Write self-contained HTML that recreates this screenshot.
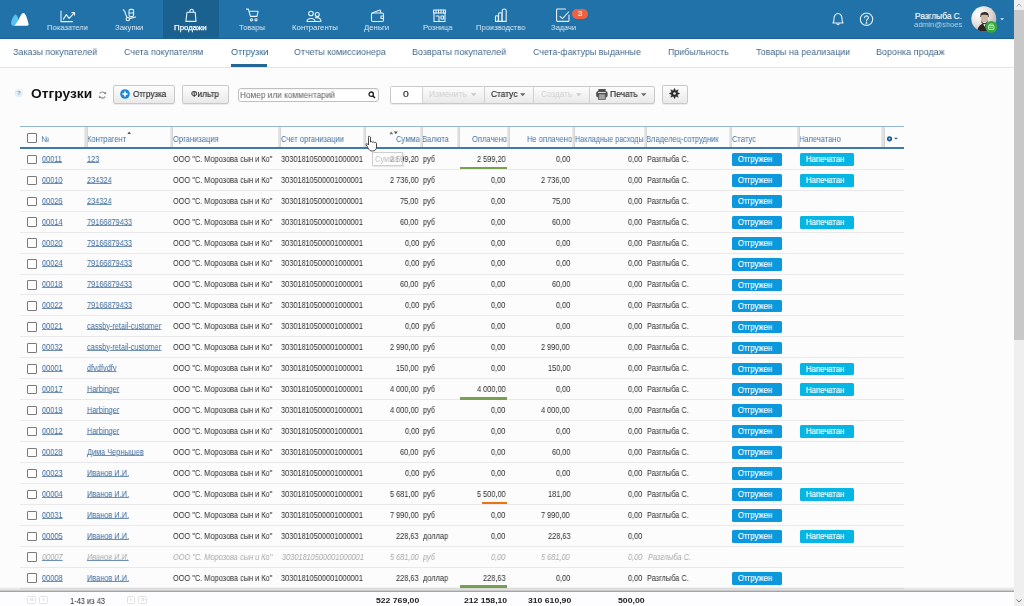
<!DOCTYPE html><html><head><meta charset="utf-8"><style>
*{margin:0;padding:0;box-sizing:border-box}
html,body{width:1024px;height:606px;overflow:hidden;background:#fdfcfd;font-family:"Liberation Sans",sans-serif}
.t{position:absolute;white-space:nowrap;line-height:1;transform-origin:0 0;will-change:transform}
.a{position:absolute}
</style></head><body>

<div class="a" style="left:0;top:0;width:1014px;height:38.6px;background:#2072a8"></div>
<div class="a" style="left:163px;top:0;width:56px;height:38px;background:#1b6190"></div>
<div class="a" style="left:0;top:37.6px;width:1014px;height:1px;background:#1a6196"></div>
<svg class="a" style="left:9px;top:11px" width="22" height="17" viewBox="0 0 22 17">
<path d="M6.1 3.5 C4.2 5.2 2.1 9 2.1 12.2 C2.1 13.8 3.2 14.8 5 14.8 L7.5 14.8 C8.8 12 9.6 9.5 9.1 7.2 C8.6 5.2 7.4 3.5 6.1 3.5Z" fill="#5cc0f0"/>
<path d="M14.5 1.9 C12.6 1.9 11 5.5 9.6 8.6 C8.4 11.2 7 12.8 5.6 14.8 L18.3 14.8 C19.4 14.8 19.8 13.9 19.5 12.6 C18.7 9.3 16.8 1.9 14.5 1.9Z" fill="#fff"/>
</svg>
<div class="t" style="left:47.29px;top:24.12px;font-size:7.8px;color:#dce9f3;transform:scaleX(0.9796);">Показатели</div>
<div class="t" style="left:115.33px;top:24.12px;font-size:7.8px;color:#dce9f3;transform:scaleX(0.9909);">Закупки</div>
<div class="t" style="left:174.17px;top:24.12px;font-size:7.8px;color:#ffffff;transform:scaleX(1.0053);-webkit-text-stroke:0.25px #fff;">Продажи</div>
<div class="t" style="left:239.45px;top:24.12px;font-size:7.8px;color:#dce9f3;transform:scaleX(0.9721);">Товары</div>
<div class="t" style="left:292.08px;top:24.12px;font-size:7.8px;color:#dce9f3;transform:scaleX(0.9895);">Контрагенты</div>
<div class="t" style="left:364.36px;top:24.12px;font-size:7.8px;color:#dce9f3;transform:scaleX(0.9915);">Деньги</div>
<div class="t" style="left:423.39px;top:24.12px;font-size:7.8px;color:#dce9f3;transform:scaleX(0.9789);">Розница</div>
<div class="t" style="left:476.39px;top:24.12px;font-size:7.8px;color:#dce9f3;transform:scaleX(0.9696);">Производство</div>
<div class="t" style="left:550.54px;top:24.12px;font-size:7.8px;color:#dce9f3;transform:scaleX(0.9610);">Задачи</div>
<svg class="a" style="left:60px;top:10px" width="17" height="13" viewBox="0 0 17 13"><path d="M1 1 V11.6 H12.5" fill="none" stroke="#e6f0f7" stroke-width="1.1" stroke-linecap="round" stroke-linejoin="round"/><path d="M3.4 9.1 L6.3 4.6 L9.1 8.3 L14.3 2.8" fill="none" stroke="#e6f0f7" stroke-width="1.1" stroke-linecap="round" stroke-linejoin="round"/><path d="M11.9 2.6 H14.5 V5.1" fill="none" stroke="#e6f0f7" stroke-width="1.1" stroke-linecap="round" stroke-linejoin="round"/></svg>
<svg class="a" style="left:121px;top:8px" width="16" height="15" viewBox="0 0 16 15"><path d="M2.3 1.7 C3.5 2.5 4.3 4.5 4.8 6.5 L5.8 9.4" fill="none" stroke="#e6f0f7" stroke-width="1.1" stroke-linecap="round" stroke-linejoin="round"/><circle cx="6.8" cy="11.1" r="1.7" fill="none" stroke="#e6f0f7" stroke-width="1.1" stroke-linecap="round" stroke-linejoin="round"/><path d="M8.5 10.6 L14.6 9" fill="none" stroke="#e6f0f7" stroke-width="1.1" stroke-linecap="round" stroke-linejoin="round"/><rect x="8" y="1.4" width="4.6" height="7.2" rx="1.6" fill="none" stroke="#e6f0f7" stroke-width="1.1" stroke-linecap="round" stroke-linejoin="round"/><path d="M8.3 5 H12.3" fill="none" stroke="#e6f0f7" stroke-width="1.1" stroke-linecap="round" stroke-linejoin="round"/></svg>
<svg class="a" style="left:184px;top:8px" width="14" height="15" viewBox="0 0 14 15"><path d="M3 4.2 H11.2 L12 13.4 H1.9 Z" fill="none" stroke="#e6f0f7" stroke-width="1.1" stroke-linecap="round" stroke-linejoin="round"/><path d="M5.9 4.2 V2.9 C5.9 0.6 9.4 0.6 9.4 2.9 V4.2" fill="none" stroke="#e6f0f7" stroke-width="1.1" stroke-linecap="round" stroke-linejoin="round"/></svg>
<svg class="a" style="left:245px;top:8px" width="15" height="15" viewBox="0 0 15 15"><path d="M1.4 1.1 H3.4 L5.4 8.4 H12 L13 3.3 H3.9" fill="none" stroke="#e6f0f7" stroke-width="1.1" stroke-linecap="round" stroke-linejoin="round"/><circle cx="6.5" cy="11.8" r="1.1" fill="none" stroke="#e6f0f7" stroke-width="1.1" stroke-linecap="round" stroke-linejoin="round"/><circle cx="11" cy="11.8" r="1.1" fill="none" stroke="#e6f0f7" stroke-width="1.1" stroke-linecap="round" stroke-linejoin="round"/></svg>
<svg class="a" style="left:306px;top:10px" width="16" height="13" viewBox="0 0 16 13"><circle cx="5" cy="3.5" r="2.3" fill="none" stroke="#e6f0f7" stroke-width="1.1" stroke-linecap="round" stroke-linejoin="round"/><path d="M1 11.5 C1 7.5 9 7.5 9 11.5 Z" fill="none" stroke="#e6f0f7" stroke-width="1.1" stroke-linecap="round" stroke-linejoin="round"/><circle cx="11.3" cy="4.5" r="2" fill="none" stroke="#e6f0f7" stroke-width="1.1" stroke-linecap="round" stroke-linejoin="round"/><path d="M9.5 7.8 C12.5 7.2 15 8.5 15 11.5 H9" fill="none" stroke="#e6f0f7" stroke-width="1.1" stroke-linecap="round" stroke-linejoin="round"/></svg>
<svg class="a" style="left:370px;top:8px" width="15" height="15" viewBox="0 0 15 15"><path d="M2 5 L10 2 L11 5" fill="none" stroke="#e6f0f7" stroke-width="1.1" stroke-linecap="round" stroke-linejoin="round"/><rect x="1.5" y="5" width="12" height="8.5" rx="1.5" fill="none" stroke="#e6f0f7" stroke-width="1.1" stroke-linecap="round" stroke-linejoin="round"/><path d="M13.5 8 H11 V10.5 H13.5" fill="none" stroke="#e6f0f7" stroke-width="1.1" stroke-linecap="round" stroke-linejoin="round"/></svg>
<svg class="a" style="left:432px;top:8px" width="15" height="15" viewBox="0 0 15 15"><path d="M1.5 2 H13.5 V5 H1.5 Z" fill="none" stroke="#e6f0f7" stroke-width="1.1" stroke-linecap="round" stroke-linejoin="round"/><path d="M4 2 V5 M6.5 2 V5 M9 2 V5 M11.5 2 V5" fill="none" stroke="#e6f0f7" stroke-width="1.1" stroke-linecap="round" stroke-linejoin="round"/><path d="M2 5 V13.5 H13 V5" fill="none" stroke="#e6f0f7" stroke-width="1.1" stroke-linecap="round" stroke-linejoin="round"/><path d="M4 8 H7 V13.5 M9 8 H11.5 V11 H9 Z" fill="none" stroke="#e6f0f7" stroke-width="1.1" stroke-linecap="round" stroke-linejoin="round"/></svg>
<svg class="a" style="left:494px;top:8px" width="15" height="15" viewBox="0 0 15 15"><path d="M1.5 13.4 V8.6 C1.5 7.4 4.3 7.4 4.3 8.6 V13.4 M4.6 13.4 V5.6 C4.6 4.4 7.8 4.4 7.8 5.6 V13.4 M8.2 13.4 V2.4 C8.2 0.6 12.2 0.6 12.2 2.4 V13.4 Z M1.5 13.4 H12.2" fill="none" stroke="#e6f0f7" stroke-width="1.1" stroke-linecap="round" stroke-linejoin="round"/></svg>
<svg class="a" style="left:555px;top:8px" width="16" height="15" viewBox="0 0 16 15"><path d="M10.5 1 H2.4 C1.9 1 1.6 1.3 1.6 1.8 V12.6 C1.6 13.1 1.9 13.4 2.4 13.4 H13.2 C13.7 13.4 14 13.1 14 12.6 V7" fill="none" stroke="#e6f0f7" stroke-width="1.1" stroke-linecap="round" stroke-linejoin="round"/><path d="M5 8.4 L7.5 10.6 L13.6 4" fill="none" stroke="#e6f0f7" stroke-width="1.1" stroke-linecap="round" stroke-linejoin="round"/></svg>
<div class="a" style="left:572px;top:9px;width:16px;height:9.5px;border-radius:5px;background:#ec6242"></div>
<div class="t" style="left:577.90px;top:10.29px;font-size:7.6px;color:#fff;-webkit-text-stroke:0.15px #fff;">3</div>
<svg class="a" style="left:831px;top:12px" width="14" height="14" viewBox="0 0 14 14"><path d="M2 11 C3 10 3 9 3 6.5 C3 3.5 5 1.5 7 1.5 C9 1.5 11 3.5 11 6.5 C11 9 11 10 12 11 Z" fill="none" stroke="#e6f0f7" stroke-width="1.1" stroke-linecap="round" stroke-linejoin="round"/><path d="M5.8 11.5 C6 13 8 13 8.2 11.5" fill="none" stroke="#e6f0f7" stroke-width="1.1" stroke-linecap="round" stroke-linejoin="round"/></svg>
<svg class="a" style="left:859px;top:12px" width="15" height="15" viewBox="0 0 15 15"><circle cx="7.5" cy="7.2" r="6.2" fill="none" stroke="#e6f0f7" stroke-width="1.1" stroke-linecap="round" stroke-linejoin="round"/><path d="M5.6 5.8 C5.6 3.2 9.4 3.2 9.4 5.7 C9.4 7.1 7.5 7.2 7.5 8.9" fill="none" stroke="#e6f0f7" stroke-width="1.1" stroke-linecap="round" stroke-linejoin="round" stroke-width="1.8" stroke-linecap="butt"/><circle cx="7.5" cy="10.9" r="0.95" fill="#e6f0f7"/></svg>
<div class="t" style="left:914.63px;top:11.66px;font-size:8.6px;color:#f6f9fc;transform:scaleX(0.9671);-webkit-text-stroke:0.2px #f6f9fc;">Разглыба С.</div>
<div class="t" style="left:913.50px;top:21.04px;font-size:7.9px;color:#b9d3e8;transform:scaleX(0.9559);">admin@shoes</div>
<svg class="a" style="left:971px;top:6px" width="28" height="28" viewBox="0 0 28 28">
<defs><radialGradient id="av" cx="0.3" cy="0.3" r="0.8"><stop offset="0" stop-color="#ffffff"/><stop offset="0.55" stop-color="#e4dfdc"/><stop offset="1" stop-color="#b9b0ab"/></radialGradient>
<clipPath id="avc"><circle cx="12.8" cy="12.8" r="12.5"/></clipPath></defs>
<circle cx="12.8" cy="12.8" r="12.5" fill="url(#av)"/>
<g clip-path="url(#avc)">
<path d="M9.5 8.5 C9.5 5.5 16.5 5 17.5 8 L17.8 11 L9.2 11 Z" fill="#3a302b"/>
<path d="M10 9.5 C11 8.5 16 8.5 17 9.5 L16.8 14 C16 17 11 17 10.2 14 Z" fill="#cdb9a8"/>
<path d="M10.3 13.5 C11 18.5 16 18.5 16.8 13.5 L16.6 16.5 C15.5 19 11.5 19 10.4 16.5 Z" fill="#4a3c34"/>
<path d="M6 26 C7 19 11 17.5 13.5 17.5 C16 17.5 20 19 21.5 26 Z" fill="#2e2622"/>
<path d="M12.3 18 L13.5 21 L14.7 18 Z" fill="#e8e0da"/>
</g>
<circle cx="20.3" cy="21" r="6" fill="#34a83a"/>
<path d="M17.6 19.6 H23 V23.4 H17.6 Z" fill="none" stroke="#cfeecf" stroke-width="0.9"/>
<path d="M18.2 19.6 L19 18 H21.6 L22.4 19.6 M18.2 21.4 H22.4" fill="none" stroke="#cfeecf" stroke-width="0.8"/>
</svg>
<svg class="a" style="left:999.5px;top:17.8px" width="5" height="3" viewBox="0 0 5 3"><path d="M0.2 0.2 H4.0 L2.1 2.3Z" fill="#e6f0f7"/></svg>
<div class="a" style="left:0;top:38.6px;width:1014px;height:28.4px;background:#fff"></div>
<div class="a" style="left:0;top:67px;width:1014px;height:1px;background:#e4e4e6"></div>
<div class="t" style="left:13.19px;top:47.28px;font-size:9.9px;color:#43688a;transform:scaleX(0.9064);">Заказы покупателей</div>
<div class="t" style="left:124.16px;top:47.28px;font-size:9.9px;color:#43688a;transform:scaleX(0.8974);">Счета покупателям</div>
<div class="t" style="left:230.59px;top:47.28px;font-size:9.9px;color:#2b6390;transform:scaleX(0.9227);">Отгрузки</div>
<div class="t" style="left:293.60px;top:47.28px;font-size:9.9px;color:#43688a;transform:scaleX(0.8995);">Отчеты комиссионера</div>
<div class="t" style="left:412.08px;top:47.28px;font-size:9.9px;color:#43688a;transform:scaleX(0.9061);">Возвраты покупателей</div>
<div class="t" style="left:533.26px;top:47.28px;font-size:9.9px;color:#43688a;transform:scaleX(0.8957);">Счета-фактуры выданные</div>
<div class="t" style="left:668.29px;top:47.28px;font-size:9.9px;color:#43688a;transform:scaleX(0.9007);">Прибыльность</div>
<div class="t" style="left:755.82px;top:47.28px;font-size:9.9px;color:#43688a;transform:scaleX(0.8979);">Товары на реализации</div>
<div class="t" style="left:876.28px;top:47.28px;font-size:9.9px;color:#43688a;transform:scaleX(0.9110);">Воронка продаж</div>
<div class="a" style="left:230.5px;top:64px;width:36.5px;height:2.6px;background:#236796"></div>
<svg class="a" style="left:14px;top:89px" width="10" height="9" viewBox="0 0 10 9"><circle cx="4.6" cy="4.2" r="4" fill="#e3eef7"/><text x="4.8" y="6.4" font-size="6" text-anchor="middle" fill="#7b9fbe" font-family="Liberation Sans" font-weight="700">?</text></svg>
<div class="t" style="left:30.95px;top:87.22px;font-size:13.7px;color:#151515;font-weight:700;transform:scaleX(1.0059);">Отгрузки</div>
<svg class="a" style="left:98px;top:91px" width="9" height="8" viewBox="0 0 9 8"><path d="M7.2 3 A3.1 3.1 0 0 0 1.6 2.6" fill="none" stroke="#8a8a8a" stroke-width="1.1"/><path d="M1.5 5 A3.1 3.1 0 0 0 7.2 5.4" fill="none" stroke="#8a8a8a" stroke-width="1.1"/><path d="M6 1 L7.6 3.4 L8.5 1.2Z" fill="#8a8a8a"/><path d="M3 7 L1.4 4.6 L0.5 6.8Z" fill="#8a8a8a"/></svg>
<div class="a" style="left:113px;top:85px;width:62px;height:18.5px;background:linear-gradient(#fdfdfd,#e9e9ea);border:1px solid #c9c9cb;border-radius:2px;box-shadow:0 1px 0 rgba(0,0,0,0.06)"></div>
<svg class="a" style="left:119.6px;top:89px" width="10" height="10" viewBox="0 0 10 10"><circle cx="5" cy="5" r="4.8" fill="#1d88cf"/><path d="M5 2.4 V7.6 M2.4 5 H7.6" stroke="#fff" stroke-width="1.6"/></svg>
<div class="t" style="left:132.64px;top:90.16px;font-size:8.6px;color:#2a2a2a;transform:scaleX(0.9416);-webkit-text-stroke:0.15px #2a2a2a;">Отгрузка</div>
<div class="a" style="left:181.5px;top:85px;width:47px;height:18.5px;background:linear-gradient(#fdfdfd,#e9e9ea);border:1px solid #c9c9cb;border-radius:2px;box-shadow:0 1px 0 rgba(0,0,0,0.06)"></div>
<div class="t" style="left:190.54px;top:90.24px;font-size:8.5px;color:#2a2a2a;transform:scaleX(0.9801);-webkit-text-stroke:0.15px #2a2a2a;">Фильтр</div>
<div class="a" style="left:238px;top:87.5px;width:141px;height:14px;background:#fff;border:1px solid #c0c0c3;border-radius:3px;box-shadow:inset 0 1px 1px rgba(0,0,0,0.05)"></div>
<div class="t" style="left:239.94px;top:90.61px;font-size:8.3px;color:#626262;transform:scaleX(0.9946);">Номер или комментарий</div>
<svg class="a" style="left:367.5px;top:91px" width="8" height="8" viewBox="0 0 8 8"><circle cx="3.2" cy="3.2" r="2.2" fill="none" stroke="#222" stroke-width="1.3"/><path d="M4.8 4.8 L7 7" stroke="#222" stroke-width="1.6"/></svg>
<div class="a" style="left:390px;top:85.5px;width:264.5px;height:18px;background:linear-gradient(#fdfdfd,#e9e9ea);border:1px solid #c9c9cb;border-radius:2px;box-shadow:0 1px 0 rgba(0,0,0,0.06)"></div>
<div class="a" style="left:391px;top:86.5px;width:31.5px;height:16px;background:#fff"></div>
<div class="a" style="left:422.3px;top:86px;width:1px;height:17px;background:#d2d2d4"></div>
<div class="a" style="left:483.5px;top:86px;width:1px;height:17px;background:#d2d2d4"></div>
<div class="a" style="left:533.2px;top:86px;width:1px;height:17px;background:#d2d2d4"></div>
<div class="a" style="left:588.6px;top:86px;width:1px;height:17px;background:#d2d2d4"></div>
<div class="t" style="left:403.38px;top:90.03px;font-size:9.0px;color:#2a2a2a;transform:scaleX(1.1574);-webkit-text-stroke:0.15px #2a2a2a;">0</div>
<div class="t" style="left:428.63px;top:90.27px;font-size:8.7px;color:#cfcfd1;transform:scaleX(0.9609);">Изменить</div>
<div class="t" style="left:490.58px;top:90.19px;font-size:8.8px;color:#2a2a2a;transform:scaleX(0.9503);-webkit-text-stroke:0.15px #2a2a2a;">Статус</div>
<div class="t" style="left:540.89px;top:90.27px;font-size:8.7px;color:#cfcfd1;transform:scaleX(0.9434);">Создать</div>
<div class="t" style="left:610.13px;top:90.16px;font-size:8.6px;color:#2a2a2a;transform:scaleX(0.9804);-webkit-text-stroke:0.15px #2a2a2a;">Печать</div>
<svg class="a" style="left:470.7px;top:92.5px" width="6" height="4" viewBox="0 0 6 4"><path d="M0 0.3 H5.4 L2.7 3.2Z" fill="#c9c9cb"/></svg>
<svg class="a" style="left:520.2px;top:92.5px" width="6" height="4" viewBox="0 0 6 4"><path d="M0 0.3 H5.4 L2.7 3.2Z" fill="#666"/></svg>
<svg class="a" style="left:575.7px;top:92.5px" width="6" height="4" viewBox="0 0 6 4"><path d="M0 0.3 H5.4 L2.7 3.2Z" fill="#c9c9cb"/></svg>
<svg class="a" style="left:641px;top:92.5px" width="6" height="4" viewBox="0 0 6 4"><path d="M0 0.3 H5.4 L2.7 3.2Z" fill="#666"/></svg>
<svg class="a" style="left:596px;top:88.7px" width="12" height="11" viewBox="0 0 12 11"><rect x="2.3" y="0" width="7.4" height="3" rx="0.6" fill="#505050"/><rect x="0.2" y="2" width="11.4" height="6.4" rx="2.2" fill="#505050"/><rect x="2" y="3.1" width="7.8" height="0.9" fill="#eeeeee"/><rect x="2.5" y="5" width="6.8" height="5.6" fill="#9a9a9a" stroke="#505050" stroke-width="0.7"/><path d="M4.3 5.5 V10.3 M5.9 5.5 V10.3 M7.5 5.5 V10.3" stroke="#b8b8b8" stroke-width="0.5"/></svg>
<div class="a" style="left:662px;top:85px;width:25.8px;height:18.6px;background:linear-gradient(#fdfdfd,#e9e9ea);border:1px solid #c9c9cb;border-radius:2px;box-shadow:0 1px 0 rgba(0,0,0,0.06)"></div>
<svg class="a" style="left:668.9px;top:88.4px" width="11" height="11" viewBox="0 0 11 11"><polygon points="5.50,0.20 6.69,2.64 9.25,1.75 8.36,4.31 10.80,5.50 8.36,6.69 9.25,9.25 6.69,8.36 5.50,10.80 4.31,8.36 1.75,9.25 2.64,6.69 0.20,5.50 2.64,4.31 1.75,1.75 4.31,2.64" fill="#2b2b2b" stroke="#2b2b2b" stroke-width="0.4" stroke-linejoin="round"/><circle cx="5.5" cy="5.5" r="1.3" fill="#f2f2f2"/></svg>
<div class="a" style="left:1014px;top:0;width:10px;height:606px;background:#efefef"></div>
<div class="a" style="left:1014px;top:10px;width:10px;height:330px;background:#c8c8c8"></div>
<svg class="a" style="left:1016px;top:3px" width="6" height="4" viewBox="0 0 6 4"><path d="M0.5 3.5 L3 1 L5.5 3.5" fill="none" stroke="#a0a0a0" stroke-width="0.9"/></svg>
<svg class="a" style="left:1016px;top:599px" width="6" height="4" viewBox="0 0 6 4"><path d="M0.5 0.5 L3 3 L5.5 0.5" fill="none" stroke="#666" stroke-width="0.9"/></svg>
<div class="a" style="left:20px;top:126px;width:884px;height:1px;background:#93b6d4"></div>
<div class="a" style="left:20px;top:127px;width:884px;height:20px;background:#fdfcfd"></div>
<div class="a" style="left:20px;top:147px;width:884px;height:2px;background:#3b7aab"></div>
<div class="t" style="left:41.32px;top:134.82px;font-size:8.4px;color:#4373a2;transform:scaleX(0.9036);">№</div>
<div class="t" style="left:86.89px;top:134.82px;font-size:8.4px;color:#4373a2;transform:scaleX(0.9036);">Контрагент</div>
<div class="t" style="left:172.66px;top:134.82px;font-size:8.4px;color:#4373a2;transform:scaleX(0.9036);">Организация</div>
<div class="t" style="left:281.02px;top:134.82px;font-size:8.4px;color:#4373a2;transform:scaleX(0.9036);">Счет организации</div>
<div class="t" style="left:395.77px;top:134.82px;font-size:8.4px;color:#4373a2;transform:scaleX(0.9036);">Сумма</div>
<div class="t" style="left:422.39px;top:134.82px;font-size:8.4px;color:#4373a2;transform:scaleX(0.9036);">Валюта</div>
<div class="t" style="left:472.24px;top:134.82px;font-size:8.4px;color:#4373a2;transform:scaleX(0.9036);">Оплачено</div>
<div class="t" style="left:527.00px;top:134.82px;font-size:8.4px;color:#4373a2;transform:scaleX(0.9036);">Не оплачено</div>
<div class="t" style="left:574.92px;top:134.82px;font-size:8.4px;color:#4373a2;transform:scaleX(0.8637);">Накладные расходы</div>
<div class="t" style="left:646.39px;top:134.82px;font-size:8.4px;color:#4373a2;transform:scaleX(0.9036);">Владелец-сотрудник</div>
<div class="t" style="left:731.62px;top:134.82px;font-size:8.4px;color:#4373a2;transform:scaleX(0.9036);">Статус</div>
<div class="t" style="left:799.39px;top:134.82px;font-size:8.4px;color:#4373a2;transform:scaleX(0.9036);">Напечатано</div>
<div class="a" style="left:27px;top:133px;width:9.5px;height:9.5px;border:1px solid #7a7a7a;border-radius:1px;background:#fff"></div>
<svg class="a" style="left:127px;top:131px" width="5" height="4" viewBox="0 0 5 4"><path d="M0.4 3 L2.2 0.6 L4 3Z" fill="#555"/></svg>
<svg class="a" style="left:388.5px;top:130.5px" width="9" height="4" viewBox="0 0 9 4"><path d="M0.3 3.3 L2.3 0.6 L4.3 3.3Z" fill="#777"/><path d="M4.8 0.6 L8.8 0.6 L6.8 3.3Z" fill="#555"/></svg>
<svg class="a" style="left:886px;top:134.5px" width="13" height="7" viewBox="0 0 13 7"><circle cx="3.5" cy="3.8" r="2.6" fill="#1f5a8a"/><circle cx="3.5" cy="3.8" r="0.9" fill="#bfe6ff"/><path d="M8 2.8 H12 L10 4.6Z" fill="#1f5a8a"/></svg>
<div class="a" style="left:84px;top:127px;width:4px;height:20px;background:#e0e0e0;border-left:1px solid #e8e8e8;border-right:1px solid #d6d6d6"></div>
<div class="a" style="left:170px;top:127px;width:3px;height:20px;background:#e0e0e0;border-left:1px solid #e8e8e8;border-right:1px solid #d6d6d6"></div>
<div class="a" style="left:278px;top:127px;width:3px;height:20px;background:#e0e0e0;border-left:1px solid #e8e8e8;border-right:1px solid #d6d6d6"></div>
<div class="a" style="left:363px;top:127px;width:3px;height:20px;background:#e0e0e0;border-left:1px solid #e8e8e8;border-right:1px solid #d6d6d6"></div>
<div class="a" style="left:420px;top:127px;width:3px;height:20px;background:#e0e0e0;border-left:1px solid #e8e8e8;border-right:1px solid #d6d6d6"></div>
<div class="a" style="left:457px;top:127px;width:3px;height:20px;background:#e0e0e0;border-left:1px solid #e8e8e8;border-right:1px solid #d6d6d6"></div>
<div class="a" style="left:507px;top:127px;width:3px;height:20px;background:#e0e0e0;border-left:1px solid #e8e8e8;border-right:1px solid #d6d6d6"></div>
<div class="a" style="left:572px;top:127px;width:3px;height:20px;background:#e0e0e0;border-left:1px solid #e8e8e8;border-right:1px solid #d6d6d6"></div>
<div class="a" style="left:644px;top:127px;width:3px;height:20px;background:#e0e0e0;border-left:1px solid #e8e8e8;border-right:1px solid #d6d6d6"></div>
<div class="a" style="left:729px;top:127px;width:3px;height:20px;background:#e0e0e0;border-left:1px solid #e8e8e8;border-right:1px solid #d6d6d6"></div>
<div class="a" style="left:797px;top:127px;width:3px;height:20px;background:#e0e0e0;border-left:1px solid #e8e8e8;border-right:1px solid #d6d6d6"></div>
<div class="a" style="left:881px;top:127px;width:4px;height:20px;background:#e0e0e0;border-left:1px solid #e8e8e8;border-right:1px solid #d6d6d6"></div>
<div class="a" style="left:20px;top:168.85px;width:884px;height:1px;background:#e9e9eb"></div>
<div class="a" style="left:27px;top:154.65px;width:9.5px;height:9.5px;border:1px solid #7a7a7a;border-radius:1px;background:#fff"></div>
<div class="t" style="left:42.01px;top:154.79px;font-size:8.5px;color:#3e6c9c;text-decoration:underline;text-decoration-thickness:0.8px;text-underline-offset:0.2px;text-decoration-color:rgba(62,108,156,0.75);transform:scaleX(0.8668);">00011</div>
<div class="t" style="left:86.95px;top:154.79px;font-size:8.5px;color:#3e6c9c;text-decoration:underline;text-decoration-thickness:0.8px;text-underline-offset:0.2px;text-decoration-color:rgba(62,108,156,0.75);transform:scaleX(0.8668);">123</div>
<div class="t" style="left:172.87px;top:154.79px;font-size:8.5px;color:#2c2c2c;transform:scaleX(0.8668);">ООО &quot;С. Морозова сын и Ко&quot;</div>
<div class="t" style="left:281.41px;top:154.79px;font-size:8.5px;color:#2c2c2c;transform:scaleX(0.8668);">30301810500001000001</div>
<div class="t" style="left:390.20px;top:154.79px;font-size:8.5px;color:#2c2c2c;transform:scaleX(0.8668);">2 599,20</div>
<div class="t" style="left:422.52px;top:154.79px;font-size:8.5px;color:#2c2c2c;transform:scaleX(0.8668);">руб</div>
<div class="t" style="left:477.00px;top:154.79px;font-size:8.5px;color:#2c2c2c;transform:scaleX(0.8668);">2 599,20</div>
<div class="t" style="left:555.73px;top:154.79px;font-size:8.5px;color:#2c2c2c;transform:scaleX(0.8668);">0,00</div>
<div class="t" style="left:628.43px;top:154.79px;font-size:8.5px;color:#2c2c2c;transform:scaleX(0.8668);">0,00</div>
<div class="t" style="left:647.31px;top:154.79px;font-size:8.5px;color:#2c2c2c;transform:scaleX(0.8668);">Разглыба С.</div>
<div class="a" style="left:732.2px;top:153.15px;width:50.3px;height:12.7px;background:#0c98dd;border-radius:1.5px"></div>
<div class="t" style="left:738.45px;top:155.21px;font-size:8.6px;color:#fff;transform:scaleX(0.9017);-webkit-text-stroke:0.15px #fff;">Отгружен</div>
<div class="a" style="left:800px;top:153.15px;width:54px;height:12.7px;background:#05b5e3;border-radius:1.5px"></div>
<div class="t" style="left:806.08px;top:155.21px;font-size:8.6px;color:#fff;transform:scaleX(0.9075);-webkit-text-stroke:0.15px #fff;">Напечатан</div>
<div class="a" style="left:460.2px;top:166.55px;width:46.8px;height:2.7px;background:#78a04e"></div>
<div class="a" style="left:20px;top:189.79px;width:884px;height:1px;background:#e9e9eb"></div>
<div class="a" style="left:27px;top:175.59px;width:9.5px;height:9.5px;border:1px solid #7a7a7a;border-radius:1px;background:#fff"></div>
<div class="t" style="left:42.01px;top:175.73px;font-size:8.5px;color:#3e6c9c;text-decoration:underline;text-decoration-thickness:0.8px;text-underline-offset:0.2px;text-decoration-color:rgba(62,108,156,0.75);transform:scaleX(0.8668);">00010</div>
<div class="t" style="left:87.13px;top:175.73px;font-size:8.5px;color:#3e6c9c;text-decoration:underline;text-decoration-thickness:0.8px;text-underline-offset:0.2px;text-decoration-color:rgba(62,108,156,0.75);transform:scaleX(0.8668);">234324</div>
<div class="t" style="left:172.87px;top:175.73px;font-size:8.5px;color:#2c2c2c;transform:scaleX(0.8668);">ООО &quot;С. Морозова сын и Ко&quot;</div>
<div class="t" style="left:281.41px;top:175.73px;font-size:8.5px;color:#2c2c2c;transform:scaleX(0.8668);">30301810500001000001</div>
<div class="t" style="left:390.20px;top:175.73px;font-size:8.5px;color:#2c2c2c;transform:scaleX(0.8668);">2 736,00</div>
<div class="t" style="left:422.52px;top:175.73px;font-size:8.5px;color:#2c2c2c;transform:scaleX(0.8668);">руб</div>
<div class="t" style="left:491.33px;top:175.73px;font-size:8.5px;color:#2c2c2c;transform:scaleX(0.8668);">0,00</div>
<div class="t" style="left:541.40px;top:175.73px;font-size:8.5px;color:#2c2c2c;transform:scaleX(0.8668);">2 736,00</div>
<div class="t" style="left:628.43px;top:175.73px;font-size:8.5px;color:#2c2c2c;transform:scaleX(0.8668);">0,00</div>
<div class="t" style="left:647.31px;top:175.73px;font-size:8.5px;color:#2c2c2c;transform:scaleX(0.8668);">Разглыба С.</div>
<div class="a" style="left:732.2px;top:174.09px;width:50.3px;height:12.7px;background:#0c98dd;border-radius:1.5px"></div>
<div class="t" style="left:738.45px;top:176.14px;font-size:8.6px;color:#fff;transform:scaleX(0.9017);-webkit-text-stroke:0.15px #fff;">Отгружен</div>
<div class="a" style="left:800px;top:174.09px;width:54px;height:12.7px;background:#05b5e3;border-radius:1.5px"></div>
<div class="t" style="left:806.08px;top:176.14px;font-size:8.6px;color:#fff;transform:scaleX(0.9075);-webkit-text-stroke:0.15px #fff;">Напечатан</div>
<div class="a" style="left:20px;top:210.72px;width:884px;height:1px;background:#e9e9eb"></div>
<div class="a" style="left:27px;top:196.52px;width:9.5px;height:9.5px;border:1px solid #7a7a7a;border-radius:1px;background:#fff"></div>
<div class="t" style="left:42.01px;top:196.66px;font-size:8.5px;color:#3e6c9c;text-decoration:underline;text-decoration-thickness:0.8px;text-underline-offset:0.2px;text-decoration-color:rgba(62,108,156,0.75);transform:scaleX(0.8668);">00026</div>
<div class="t" style="left:87.13px;top:196.66px;font-size:8.5px;color:#3e6c9c;text-decoration:underline;text-decoration-thickness:0.8px;text-underline-offset:0.2px;text-decoration-color:rgba(62,108,156,0.75);transform:scaleX(0.8668);">234324</div>
<div class="t" style="left:172.87px;top:196.66px;font-size:8.5px;color:#2c2c2c;transform:scaleX(0.8668);">ООО &quot;С. Морозова сын и Ко&quot;</div>
<div class="t" style="left:281.41px;top:196.66px;font-size:8.5px;color:#2c2c2c;transform:scaleX(0.8668);">30301810500001000001</div>
<div class="t" style="left:400.44px;top:196.66px;font-size:8.5px;color:#2c2c2c;transform:scaleX(0.8668);">75,00</div>
<div class="t" style="left:422.52px;top:196.66px;font-size:8.5px;color:#2c2c2c;transform:scaleX(0.8668);">руб</div>
<div class="t" style="left:491.33px;top:196.66px;font-size:8.5px;color:#2c2c2c;transform:scaleX(0.8668);">0,00</div>
<div class="t" style="left:551.64px;top:196.66px;font-size:8.5px;color:#2c2c2c;transform:scaleX(0.8668);">75,00</div>
<div class="t" style="left:628.43px;top:196.66px;font-size:8.5px;color:#2c2c2c;transform:scaleX(0.8668);">0,00</div>
<div class="t" style="left:647.31px;top:196.66px;font-size:8.5px;color:#2c2c2c;transform:scaleX(0.8668);">Разглыба С.</div>
<div class="a" style="left:732.2px;top:195.02px;width:50.3px;height:12.7px;background:#0c98dd;border-radius:1.5px"></div>
<div class="t" style="left:738.45px;top:197.08px;font-size:8.6px;color:#fff;transform:scaleX(0.9017);-webkit-text-stroke:0.15px #fff;">Отгружен</div>
<div class="a" style="left:20px;top:231.66px;width:884px;height:1px;background:#e9e9eb"></div>
<div class="a" style="left:27px;top:217.46px;width:9.5px;height:9.5px;border:1px solid #7a7a7a;border-radius:1px;background:#fff"></div>
<div class="t" style="left:42.01px;top:217.60px;font-size:8.5px;color:#3e6c9c;text-decoration:underline;text-decoration-thickness:0.8px;text-underline-offset:0.2px;text-decoration-color:rgba(62,108,156,0.75);transform:scaleX(0.8668);">00014</div>
<div class="t" style="left:87.13px;top:217.60px;font-size:8.5px;color:#3e6c9c;text-decoration:underline;text-decoration-thickness:0.8px;text-underline-offset:0.2px;text-decoration-color:rgba(62,108,156,0.75);transform:scaleX(0.8668);">79166879433</div>
<div class="t" style="left:172.87px;top:217.60px;font-size:8.5px;color:#2c2c2c;transform:scaleX(0.8668);">ООО &quot;С. Морозова сын и Ко&quot;</div>
<div class="t" style="left:281.41px;top:217.60px;font-size:8.5px;color:#2c2c2c;transform:scaleX(0.8668);">30301810500001000001</div>
<div class="t" style="left:400.44px;top:217.60px;font-size:8.5px;color:#2c2c2c;transform:scaleX(0.8668);">60,00</div>
<div class="t" style="left:422.52px;top:217.60px;font-size:8.5px;color:#2c2c2c;transform:scaleX(0.8668);">руб</div>
<div class="t" style="left:491.33px;top:217.60px;font-size:8.5px;color:#2c2c2c;transform:scaleX(0.8668);">0,00</div>
<div class="t" style="left:551.64px;top:217.60px;font-size:8.5px;color:#2c2c2c;transform:scaleX(0.8668);">60,00</div>
<div class="t" style="left:628.43px;top:217.60px;font-size:8.5px;color:#2c2c2c;transform:scaleX(0.8668);">0,00</div>
<div class="t" style="left:647.31px;top:217.60px;font-size:8.5px;color:#2c2c2c;transform:scaleX(0.8668);">Разглыба С.</div>
<div class="a" style="left:732.2px;top:215.96px;width:50.3px;height:12.7px;background:#0c98dd;border-radius:1.5px"></div>
<div class="t" style="left:738.45px;top:218.02px;font-size:8.6px;color:#fff;transform:scaleX(0.9017);-webkit-text-stroke:0.15px #fff;">Отгружен</div>
<div class="a" style="left:800px;top:215.96px;width:54px;height:12.7px;background:#05b5e3;border-radius:1.5px"></div>
<div class="t" style="left:806.08px;top:218.02px;font-size:8.6px;color:#fff;transform:scaleX(0.9075);-webkit-text-stroke:0.15px #fff;">Напечатан</div>
<div class="a" style="left:20px;top:252.59px;width:884px;height:1px;background:#e9e9eb"></div>
<div class="a" style="left:27px;top:238.39px;width:9.5px;height:9.5px;border:1px solid #7a7a7a;border-radius:1px;background:#fff"></div>
<div class="t" style="left:42.01px;top:238.53px;font-size:8.5px;color:#3e6c9c;text-decoration:underline;text-decoration-thickness:0.8px;text-underline-offset:0.2px;text-decoration-color:rgba(62,108,156,0.75);transform:scaleX(0.8668);">00020</div>
<div class="t" style="left:87.13px;top:238.53px;font-size:8.5px;color:#3e6c9c;text-decoration:underline;text-decoration-thickness:0.8px;text-underline-offset:0.2px;text-decoration-color:rgba(62,108,156,0.75);transform:scaleX(0.8668);">79166879433</div>
<div class="t" style="left:172.87px;top:238.53px;font-size:8.5px;color:#2c2c2c;transform:scaleX(0.8668);">ООО &quot;С. Морозова сын и Ко&quot;</div>
<div class="t" style="left:281.41px;top:238.53px;font-size:8.5px;color:#2c2c2c;transform:scaleX(0.8668);">30301810500001000001</div>
<div class="t" style="left:404.53px;top:238.53px;font-size:8.5px;color:#2c2c2c;transform:scaleX(0.8668);">0,00</div>
<div class="t" style="left:422.52px;top:238.53px;font-size:8.5px;color:#2c2c2c;transform:scaleX(0.8668);">руб</div>
<div class="t" style="left:491.33px;top:238.53px;font-size:8.5px;color:#2c2c2c;transform:scaleX(0.8668);">0,00</div>
<div class="t" style="left:555.73px;top:238.53px;font-size:8.5px;color:#2c2c2c;transform:scaleX(0.8668);">0,00</div>
<div class="t" style="left:628.43px;top:238.53px;font-size:8.5px;color:#2c2c2c;transform:scaleX(0.8668);">0,00</div>
<div class="t" style="left:647.31px;top:238.53px;font-size:8.5px;color:#2c2c2c;transform:scaleX(0.8668);">Разглыба С.</div>
<div class="a" style="left:732.2px;top:236.89px;width:50.3px;height:12.7px;background:#0c98dd;border-radius:1.5px"></div>
<div class="t" style="left:738.45px;top:238.95px;font-size:8.6px;color:#fff;transform:scaleX(0.9017);-webkit-text-stroke:0.15px #fff;">Отгружен</div>
<div class="a" style="left:20px;top:273.53px;width:884px;height:1px;background:#e9e9eb"></div>
<div class="a" style="left:27px;top:259.33px;width:9.5px;height:9.5px;border:1px solid #7a7a7a;border-radius:1px;background:#fff"></div>
<div class="t" style="left:42.01px;top:259.47px;font-size:8.5px;color:#3e6c9c;text-decoration:underline;text-decoration-thickness:0.8px;text-underline-offset:0.2px;text-decoration-color:rgba(62,108,156,0.75);transform:scaleX(0.8668);">00024</div>
<div class="t" style="left:87.13px;top:259.47px;font-size:8.5px;color:#3e6c9c;text-decoration:underline;text-decoration-thickness:0.8px;text-underline-offset:0.2px;text-decoration-color:rgba(62,108,156,0.75);transform:scaleX(0.8668);">79166879433</div>
<div class="t" style="left:172.87px;top:259.47px;font-size:8.5px;color:#2c2c2c;transform:scaleX(0.8668);">ООО &quot;С. Морозова сын и Ко&quot;</div>
<div class="t" style="left:281.41px;top:259.47px;font-size:8.5px;color:#2c2c2c;transform:scaleX(0.8668);">30301810500001000001</div>
<div class="t" style="left:404.53px;top:259.47px;font-size:8.5px;color:#2c2c2c;transform:scaleX(0.8668);">0,00</div>
<div class="t" style="left:422.52px;top:259.47px;font-size:8.5px;color:#2c2c2c;transform:scaleX(0.8668);">руб</div>
<div class="t" style="left:491.33px;top:259.47px;font-size:8.5px;color:#2c2c2c;transform:scaleX(0.8668);">0,00</div>
<div class="t" style="left:555.73px;top:259.47px;font-size:8.5px;color:#2c2c2c;transform:scaleX(0.8668);">0,00</div>
<div class="t" style="left:628.43px;top:259.47px;font-size:8.5px;color:#2c2c2c;transform:scaleX(0.8668);">0,00</div>
<div class="t" style="left:647.31px;top:259.47px;font-size:8.5px;color:#2c2c2c;transform:scaleX(0.8668);">Разглыба С.</div>
<div class="a" style="left:732.2px;top:257.83px;width:50.3px;height:12.7px;background:#0c98dd;border-radius:1.5px"></div>
<div class="t" style="left:738.45px;top:259.89px;font-size:8.6px;color:#fff;transform:scaleX(0.9017);-webkit-text-stroke:0.15px #fff;">Отгружен</div>
<div class="a" style="left:20px;top:294.47px;width:884px;height:1px;background:#e9e9eb"></div>
<div class="a" style="left:27px;top:280.27px;width:9.5px;height:9.5px;border:1px solid #7a7a7a;border-radius:1px;background:#fff"></div>
<div class="t" style="left:42.01px;top:280.41px;font-size:8.5px;color:#3e6c9c;text-decoration:underline;text-decoration-thickness:0.8px;text-underline-offset:0.2px;text-decoration-color:rgba(62,108,156,0.75);transform:scaleX(0.8668);">00018</div>
<div class="t" style="left:87.13px;top:280.41px;font-size:8.5px;color:#3e6c9c;text-decoration:underline;text-decoration-thickness:0.8px;text-underline-offset:0.2px;text-decoration-color:rgba(62,108,156,0.75);transform:scaleX(0.8668);">79166879433</div>
<div class="t" style="left:172.87px;top:280.41px;font-size:8.5px;color:#2c2c2c;transform:scaleX(0.8668);">ООО &quot;С. Морозова сын и Ко&quot;</div>
<div class="t" style="left:281.41px;top:280.41px;font-size:8.5px;color:#2c2c2c;transform:scaleX(0.8668);">30301810500001000001</div>
<div class="t" style="left:400.44px;top:280.41px;font-size:8.5px;color:#2c2c2c;transform:scaleX(0.8668);">60,00</div>
<div class="t" style="left:422.52px;top:280.41px;font-size:8.5px;color:#2c2c2c;transform:scaleX(0.8668);">руб</div>
<div class="t" style="left:491.33px;top:280.41px;font-size:8.5px;color:#2c2c2c;transform:scaleX(0.8668);">0,00</div>
<div class="t" style="left:551.64px;top:280.41px;font-size:8.5px;color:#2c2c2c;transform:scaleX(0.8668);">60,00</div>
<div class="t" style="left:628.43px;top:280.41px;font-size:8.5px;color:#2c2c2c;transform:scaleX(0.8668);">0,00</div>
<div class="t" style="left:647.31px;top:280.41px;font-size:8.5px;color:#2c2c2c;transform:scaleX(0.8668);">Разглыба С.</div>
<div class="a" style="left:732.2px;top:278.77px;width:50.3px;height:12.7px;background:#0c98dd;border-radius:1.5px"></div>
<div class="t" style="left:738.45px;top:280.82px;font-size:8.6px;color:#fff;transform:scaleX(0.9017);-webkit-text-stroke:0.15px #fff;">Отгружен</div>
<div class="a" style="left:20px;top:315.40px;width:884px;height:1px;background:#e9e9eb"></div>
<div class="a" style="left:27px;top:301.20px;width:9.5px;height:9.5px;border:1px solid #7a7a7a;border-radius:1px;background:#fff"></div>
<div class="t" style="left:42.01px;top:301.34px;font-size:8.5px;color:#3e6c9c;text-decoration:underline;text-decoration-thickness:0.8px;text-underline-offset:0.2px;text-decoration-color:rgba(62,108,156,0.75);transform:scaleX(0.8668);">00022</div>
<div class="t" style="left:87.13px;top:301.34px;font-size:8.5px;color:#3e6c9c;text-decoration:underline;text-decoration-thickness:0.8px;text-underline-offset:0.2px;text-decoration-color:rgba(62,108,156,0.75);transform:scaleX(0.8668);">79166879433</div>
<div class="t" style="left:172.87px;top:301.34px;font-size:8.5px;color:#2c2c2c;transform:scaleX(0.8668);">ООО &quot;С. Морозова сын и Ко&quot;</div>
<div class="t" style="left:281.41px;top:301.34px;font-size:8.5px;color:#2c2c2c;transform:scaleX(0.8668);">30301810500001000001</div>
<div class="t" style="left:404.53px;top:301.34px;font-size:8.5px;color:#2c2c2c;transform:scaleX(0.8668);">0,00</div>
<div class="t" style="left:422.52px;top:301.34px;font-size:8.5px;color:#2c2c2c;transform:scaleX(0.8668);">руб</div>
<div class="t" style="left:491.33px;top:301.34px;font-size:8.5px;color:#2c2c2c;transform:scaleX(0.8668);">0,00</div>
<div class="t" style="left:555.73px;top:301.34px;font-size:8.5px;color:#2c2c2c;transform:scaleX(0.8668);">0,00</div>
<div class="t" style="left:628.43px;top:301.34px;font-size:8.5px;color:#2c2c2c;transform:scaleX(0.8668);">0,00</div>
<div class="t" style="left:647.31px;top:301.34px;font-size:8.5px;color:#2c2c2c;transform:scaleX(0.8668);">Разглыба С.</div>
<div class="a" style="left:732.2px;top:299.70px;width:50.3px;height:12.7px;background:#0c98dd;border-radius:1.5px"></div>
<div class="t" style="left:738.45px;top:301.76px;font-size:8.6px;color:#fff;transform:scaleX(0.9017);-webkit-text-stroke:0.15px #fff;">Отгружен</div>
<div class="a" style="left:20px;top:336.34px;width:884px;height:1px;background:#e9e9eb"></div>
<div class="a" style="left:27px;top:322.14px;width:9.5px;height:9.5px;border:1px solid #7a7a7a;border-radius:1px;background:#fff"></div>
<div class="t" style="left:42.01px;top:322.28px;font-size:8.5px;color:#3e6c9c;text-decoration:underline;text-decoration-thickness:0.8px;text-underline-offset:0.2px;text-decoration-color:rgba(62,108,156,0.75);transform:scaleX(0.8668);">00021</div>
<div class="t" style="left:87.21px;top:322.28px;font-size:8.5px;color:#3e6c9c;text-decoration:underline;text-decoration-thickness:0.8px;text-underline-offset:0.2px;text-decoration-color:rgba(62,108,156,0.75);transform:scaleX(0.8668);">cassby-retail-customer</div>
<div class="t" style="left:172.87px;top:322.28px;font-size:8.5px;color:#2c2c2c;transform:scaleX(0.8668);">ООО &quot;С. Морозова сын и Ко&quot;</div>
<div class="t" style="left:281.41px;top:322.28px;font-size:8.5px;color:#2c2c2c;transform:scaleX(0.8668);">30301810500001000001</div>
<div class="t" style="left:404.53px;top:322.28px;font-size:8.5px;color:#2c2c2c;transform:scaleX(0.8668);">0,00</div>
<div class="t" style="left:422.52px;top:322.28px;font-size:8.5px;color:#2c2c2c;transform:scaleX(0.8668);">руб</div>
<div class="t" style="left:491.33px;top:322.28px;font-size:8.5px;color:#2c2c2c;transform:scaleX(0.8668);">0,00</div>
<div class="t" style="left:555.73px;top:322.28px;font-size:8.5px;color:#2c2c2c;transform:scaleX(0.8668);">0,00</div>
<div class="t" style="left:628.43px;top:322.28px;font-size:8.5px;color:#2c2c2c;transform:scaleX(0.8668);">0,00</div>
<div class="t" style="left:647.31px;top:322.28px;font-size:8.5px;color:#2c2c2c;transform:scaleX(0.8668);">Разглыба С.</div>
<div class="a" style="left:732.2px;top:320.64px;width:50.3px;height:12.7px;background:#0c98dd;border-radius:1.5px"></div>
<div class="t" style="left:738.45px;top:322.70px;font-size:8.6px;color:#fff;transform:scaleX(0.9017);-webkit-text-stroke:0.15px #fff;">Отгружен</div>
<div class="a" style="left:20px;top:357.27px;width:884px;height:1px;background:#e9e9eb"></div>
<div class="a" style="left:27px;top:343.07px;width:9.5px;height:9.5px;border:1px solid #7a7a7a;border-radius:1px;background:#fff"></div>
<div class="t" style="left:42.01px;top:343.21px;font-size:8.5px;color:#3e6c9c;text-decoration:underline;text-decoration-thickness:0.8px;text-underline-offset:0.2px;text-decoration-color:rgba(62,108,156,0.75);transform:scaleX(0.8668);">00032</div>
<div class="t" style="left:87.21px;top:343.21px;font-size:8.5px;color:#3e6c9c;text-decoration:underline;text-decoration-thickness:0.8px;text-underline-offset:0.2px;text-decoration-color:rgba(62,108,156,0.75);transform:scaleX(0.8668);">cassby-retail-customer</div>
<div class="t" style="left:172.87px;top:343.21px;font-size:8.5px;color:#2c2c2c;transform:scaleX(0.8668);">ООО &quot;С. Морозова сын и Ко&quot;</div>
<div class="t" style="left:281.41px;top:343.21px;font-size:8.5px;color:#2c2c2c;transform:scaleX(0.8668);">30301810500001000001</div>
<div class="t" style="left:390.20px;top:343.21px;font-size:8.5px;color:#2c2c2c;transform:scaleX(0.8668);">2 990,00</div>
<div class="t" style="left:422.52px;top:343.21px;font-size:8.5px;color:#2c2c2c;transform:scaleX(0.8668);">руб</div>
<div class="t" style="left:491.33px;top:343.21px;font-size:8.5px;color:#2c2c2c;transform:scaleX(0.8668);">0,00</div>
<div class="t" style="left:541.40px;top:343.21px;font-size:8.5px;color:#2c2c2c;transform:scaleX(0.8668);">2 990,00</div>
<div class="t" style="left:628.43px;top:343.21px;font-size:8.5px;color:#2c2c2c;transform:scaleX(0.8668);">0,00</div>
<div class="t" style="left:647.31px;top:343.21px;font-size:8.5px;color:#2c2c2c;transform:scaleX(0.8668);">Разглыба С.</div>
<div class="a" style="left:732.2px;top:341.57px;width:50.3px;height:12.7px;background:#0c98dd;border-radius:1.5px"></div>
<div class="t" style="left:738.45px;top:343.63px;font-size:8.6px;color:#fff;transform:scaleX(0.9017);-webkit-text-stroke:0.15px #fff;">Отгружен</div>
<div class="a" style="left:20px;top:378.21px;width:884px;height:1px;background:#e9e9eb"></div>
<div class="a" style="left:27px;top:364.01px;width:9.5px;height:9.5px;border:1px solid #7a7a7a;border-radius:1px;background:#fff"></div>
<div class="t" style="left:42.01px;top:364.15px;font-size:8.5px;color:#3e6c9c;text-decoration:underline;text-decoration-thickness:0.8px;text-underline-offset:0.2px;text-decoration-color:rgba(62,108,156,0.75);transform:scaleX(0.8668);">00001</div>
<div class="t" style="left:87.21px;top:364.15px;font-size:8.5px;color:#3e6c9c;text-decoration:underline;text-decoration-thickness:0.8px;text-underline-offset:0.2px;text-decoration-color:rgba(62,108,156,0.75);transform:scaleX(0.8668);">dfvdfvdfv</div>
<div class="t" style="left:172.87px;top:364.15px;font-size:8.5px;color:#2c2c2c;transform:scaleX(0.8668);">ООО &quot;С. Морозова сын и Ко&quot;</div>
<div class="t" style="left:281.41px;top:364.15px;font-size:8.5px;color:#2c2c2c;transform:scaleX(0.8668);">30301810500001000001</div>
<div class="t" style="left:396.31px;top:364.15px;font-size:8.5px;color:#2c2c2c;transform:scaleX(0.8668);">150,00</div>
<div class="t" style="left:422.52px;top:364.15px;font-size:8.5px;color:#2c2c2c;transform:scaleX(0.8668);">руб</div>
<div class="t" style="left:491.33px;top:364.15px;font-size:8.5px;color:#2c2c2c;transform:scaleX(0.8668);">0,00</div>
<div class="t" style="left:547.51px;top:364.15px;font-size:8.5px;color:#2c2c2c;transform:scaleX(0.8668);">150,00</div>
<div class="t" style="left:628.43px;top:364.15px;font-size:8.5px;color:#2c2c2c;transform:scaleX(0.8668);">0,00</div>
<div class="t" style="left:647.31px;top:364.15px;font-size:8.5px;color:#2c2c2c;transform:scaleX(0.8668);">Разглыба С.</div>
<div class="a" style="left:732.2px;top:362.51px;width:50.3px;height:12.7px;background:#0c98dd;border-radius:1.5px"></div>
<div class="t" style="left:738.45px;top:364.57px;font-size:8.6px;color:#fff;transform:scaleX(0.9017);-webkit-text-stroke:0.15px #fff;">Отгружен</div>
<div class="a" style="left:800px;top:362.51px;width:54px;height:12.7px;background:#05b5e3;border-radius:1.5px"></div>
<div class="t" style="left:806.08px;top:364.57px;font-size:8.6px;color:#fff;transform:scaleX(0.9075);-webkit-text-stroke:0.15px #fff;">Напечатан</div>
<div class="a" style="left:20px;top:399.15px;width:884px;height:1px;background:#e9e9eb"></div>
<div class="a" style="left:27px;top:384.95px;width:9.5px;height:9.5px;border:1px solid #7a7a7a;border-radius:1px;background:#fff"></div>
<div class="t" style="left:42.01px;top:385.09px;font-size:8.5px;color:#3e6c9c;text-decoration:underline;text-decoration-thickness:0.8px;text-underline-offset:0.2px;text-decoration-color:rgba(62,108,156,0.75);transform:scaleX(0.8668);">00017</div>
<div class="t" style="left:86.91px;top:385.09px;font-size:8.5px;color:#3e6c9c;text-decoration:underline;text-decoration-thickness:0.8px;text-underline-offset:0.2px;text-decoration-color:rgba(62,108,156,0.75);transform:scaleX(0.8668);">Harbinger</div>
<div class="t" style="left:172.87px;top:385.09px;font-size:8.5px;color:#2c2c2c;transform:scaleX(0.8668);">ООО &quot;С. Морозова сын и Ко&quot;</div>
<div class="t" style="left:281.41px;top:385.09px;font-size:8.5px;color:#2c2c2c;transform:scaleX(0.8668);">30301810500001000001</div>
<div class="t" style="left:390.20px;top:385.09px;font-size:8.5px;color:#2c2c2c;transform:scaleX(0.8668);">4 000,00</div>
<div class="t" style="left:422.52px;top:385.09px;font-size:8.5px;color:#2c2c2c;transform:scaleX(0.8668);">руб</div>
<div class="t" style="left:477.00px;top:385.09px;font-size:8.5px;color:#2c2c2c;transform:scaleX(0.8668);">4 000,00</div>
<div class="t" style="left:555.73px;top:385.09px;font-size:8.5px;color:#2c2c2c;transform:scaleX(0.8668);">0,00</div>
<div class="t" style="left:628.43px;top:385.09px;font-size:8.5px;color:#2c2c2c;transform:scaleX(0.8668);">0,00</div>
<div class="t" style="left:647.31px;top:385.09px;font-size:8.5px;color:#2c2c2c;transform:scaleX(0.8668);">Разглыба С.</div>
<div class="a" style="left:732.2px;top:383.45px;width:50.3px;height:12.7px;background:#0c98dd;border-radius:1.5px"></div>
<div class="t" style="left:738.45px;top:385.50px;font-size:8.6px;color:#fff;transform:scaleX(0.9017);-webkit-text-stroke:0.15px #fff;">Отгружен</div>
<div class="a" style="left:800px;top:383.45px;width:54px;height:12.7px;background:#05b5e3;border-radius:1.5px"></div>
<div class="t" style="left:806.08px;top:385.50px;font-size:8.6px;color:#fff;transform:scaleX(0.9075);-webkit-text-stroke:0.15px #fff;">Напечатан</div>
<div class="a" style="left:460.2px;top:396.85px;width:46.8px;height:2.7px;background:#78a04e"></div>
<div class="a" style="left:20px;top:420.08px;width:884px;height:1px;background:#e9e9eb"></div>
<div class="a" style="left:27px;top:405.88px;width:9.5px;height:9.5px;border:1px solid #7a7a7a;border-radius:1px;background:#fff"></div>
<div class="t" style="left:42.01px;top:406.02px;font-size:8.5px;color:#3e6c9c;text-decoration:underline;text-decoration-thickness:0.8px;text-underline-offset:0.2px;text-decoration-color:rgba(62,108,156,0.75);transform:scaleX(0.8668);">00019</div>
<div class="t" style="left:86.91px;top:406.02px;font-size:8.5px;color:#3e6c9c;text-decoration:underline;text-decoration-thickness:0.8px;text-underline-offset:0.2px;text-decoration-color:rgba(62,108,156,0.75);transform:scaleX(0.8668);">Harbinger</div>
<div class="t" style="left:172.87px;top:406.02px;font-size:8.5px;color:#2c2c2c;transform:scaleX(0.8668);">ООО &quot;С. Морозова сын и Ко&quot;</div>
<div class="t" style="left:281.41px;top:406.02px;font-size:8.5px;color:#2c2c2c;transform:scaleX(0.8668);">30301810500001000001</div>
<div class="t" style="left:390.20px;top:406.02px;font-size:8.5px;color:#2c2c2c;transform:scaleX(0.8668);">4 000,00</div>
<div class="t" style="left:422.52px;top:406.02px;font-size:8.5px;color:#2c2c2c;transform:scaleX(0.8668);">руб</div>
<div class="t" style="left:491.33px;top:406.02px;font-size:8.5px;color:#2c2c2c;transform:scaleX(0.8668);">0,00</div>
<div class="t" style="left:541.40px;top:406.02px;font-size:8.5px;color:#2c2c2c;transform:scaleX(0.8668);">4 000,00</div>
<div class="t" style="left:628.43px;top:406.02px;font-size:8.5px;color:#2c2c2c;transform:scaleX(0.8668);">0,00</div>
<div class="t" style="left:647.31px;top:406.02px;font-size:8.5px;color:#2c2c2c;transform:scaleX(0.8668);">Разглыба С.</div>
<div class="a" style="left:732.2px;top:404.38px;width:50.3px;height:12.7px;background:#0c98dd;border-radius:1.5px"></div>
<div class="t" style="left:738.45px;top:406.44px;font-size:8.6px;color:#fff;transform:scaleX(0.9017);-webkit-text-stroke:0.15px #fff;">Отгружен</div>
<div class="a" style="left:20px;top:441.02px;width:884px;height:1px;background:#e9e9eb"></div>
<div class="a" style="left:27px;top:426.82px;width:9.5px;height:9.5px;border:1px solid #7a7a7a;border-radius:1px;background:#fff"></div>
<div class="t" style="left:42.01px;top:426.96px;font-size:8.5px;color:#3e6c9c;text-decoration:underline;text-decoration-thickness:0.8px;text-underline-offset:0.2px;text-decoration-color:rgba(62,108,156,0.75);transform:scaleX(0.8668);">00012</div>
<div class="t" style="left:86.91px;top:426.96px;font-size:8.5px;color:#3e6c9c;text-decoration:underline;text-decoration-thickness:0.8px;text-underline-offset:0.2px;text-decoration-color:rgba(62,108,156,0.75);transform:scaleX(0.8668);">Harbinger</div>
<div class="t" style="left:172.87px;top:426.96px;font-size:8.5px;color:#2c2c2c;transform:scaleX(0.8668);">ООО &quot;С. Морозова сын и Ко&quot;</div>
<div class="t" style="left:281.41px;top:426.96px;font-size:8.5px;color:#2c2c2c;transform:scaleX(0.8668);">30301810500001000001</div>
<div class="t" style="left:404.53px;top:426.96px;font-size:8.5px;color:#2c2c2c;transform:scaleX(0.8668);">0,00</div>
<div class="t" style="left:422.52px;top:426.96px;font-size:8.5px;color:#2c2c2c;transform:scaleX(0.8668);">руб</div>
<div class="t" style="left:491.33px;top:426.96px;font-size:8.5px;color:#2c2c2c;transform:scaleX(0.8668);">0,00</div>
<div class="t" style="left:555.73px;top:426.96px;font-size:8.5px;color:#2c2c2c;transform:scaleX(0.8668);">0,00</div>
<div class="t" style="left:628.43px;top:426.96px;font-size:8.5px;color:#2c2c2c;transform:scaleX(0.8668);">0,00</div>
<div class="t" style="left:647.31px;top:426.96px;font-size:8.5px;color:#2c2c2c;transform:scaleX(0.8668);">Разглыба С.</div>
<div class="a" style="left:732.2px;top:425.32px;width:50.3px;height:12.7px;background:#0c98dd;border-radius:1.5px"></div>
<div class="t" style="left:738.45px;top:427.38px;font-size:8.6px;color:#fff;transform:scaleX(0.9017);-webkit-text-stroke:0.15px #fff;">Отгружен</div>
<div class="a" style="left:800px;top:425.32px;width:54px;height:12.7px;background:#05b5e3;border-radius:1.5px"></div>
<div class="t" style="left:806.08px;top:427.38px;font-size:8.6px;color:#fff;transform:scaleX(0.9075);-webkit-text-stroke:0.15px #fff;">Напечатан</div>
<div class="a" style="left:20px;top:461.95px;width:884px;height:1px;background:#e9e9eb"></div>
<div class="a" style="left:27px;top:447.75px;width:9.5px;height:9.5px;border:1px solid #7a7a7a;border-radius:1px;background:#fff"></div>
<div class="t" style="left:42.01px;top:447.89px;font-size:8.5px;color:#3e6c9c;text-decoration:underline;text-decoration-thickness:0.8px;text-underline-offset:0.2px;text-decoration-color:rgba(62,108,156,0.75);transform:scaleX(0.8668);">00028</div>
<div class="t" style="left:87.46px;top:447.89px;font-size:8.5px;color:#3e6c9c;text-decoration:underline;text-decoration-thickness:0.8px;text-underline-offset:0.2px;text-decoration-color:rgba(62,108,156,0.75);transform:scaleX(0.8668);">Дима Чернышев</div>
<div class="t" style="left:172.87px;top:447.89px;font-size:8.5px;color:#2c2c2c;transform:scaleX(0.8668);">ООО &quot;С. Морозова сын и Ко&quot;</div>
<div class="t" style="left:281.41px;top:447.89px;font-size:8.5px;color:#2c2c2c;transform:scaleX(0.8668);">30301810500001000001</div>
<div class="t" style="left:400.44px;top:447.89px;font-size:8.5px;color:#2c2c2c;transform:scaleX(0.8668);">60,00</div>
<div class="t" style="left:422.52px;top:447.89px;font-size:8.5px;color:#2c2c2c;transform:scaleX(0.8668);">руб</div>
<div class="t" style="left:491.33px;top:447.89px;font-size:8.5px;color:#2c2c2c;transform:scaleX(0.8668);">0,00</div>
<div class="t" style="left:551.64px;top:447.89px;font-size:8.5px;color:#2c2c2c;transform:scaleX(0.8668);">60,00</div>
<div class="t" style="left:628.43px;top:447.89px;font-size:8.5px;color:#2c2c2c;transform:scaleX(0.8668);">0,00</div>
<div class="t" style="left:647.31px;top:447.89px;font-size:8.5px;color:#2c2c2c;transform:scaleX(0.8668);">Разглыба С.</div>
<div class="a" style="left:732.2px;top:446.25px;width:50.3px;height:12.7px;background:#0c98dd;border-radius:1.5px"></div>
<div class="t" style="left:738.45px;top:448.31px;font-size:8.6px;color:#fff;transform:scaleX(0.9017);-webkit-text-stroke:0.15px #fff;">Отгружен</div>
<div class="a" style="left:20px;top:482.89px;width:884px;height:1px;background:#e9e9eb"></div>
<div class="a" style="left:27px;top:468.69px;width:9.5px;height:9.5px;border:1px solid #7a7a7a;border-radius:1px;background:#fff"></div>
<div class="t" style="left:42.01px;top:468.83px;font-size:8.5px;color:#3e6c9c;text-decoration:underline;text-decoration-thickness:0.8px;text-underline-offset:0.2px;text-decoration-color:rgba(62,108,156,0.75);transform:scaleX(0.8668);">00023</div>
<div class="t" style="left:86.91px;top:468.83px;font-size:8.5px;color:#3e6c9c;text-decoration:underline;text-decoration-thickness:0.8px;text-underline-offset:0.2px;text-decoration-color:rgba(62,108,156,0.75);transform:scaleX(0.8668);">Иванов И.И.</div>
<div class="t" style="left:172.87px;top:468.83px;font-size:8.5px;color:#2c2c2c;transform:scaleX(0.8668);">ООО &quot;С. Морозова сын и Ко&quot;</div>
<div class="t" style="left:281.41px;top:468.83px;font-size:8.5px;color:#2c2c2c;transform:scaleX(0.8668);">30301810500001000001</div>
<div class="t" style="left:404.53px;top:468.83px;font-size:8.5px;color:#2c2c2c;transform:scaleX(0.8668);">0,00</div>
<div class="t" style="left:422.52px;top:468.83px;font-size:8.5px;color:#2c2c2c;transform:scaleX(0.8668);">руб</div>
<div class="t" style="left:491.33px;top:468.83px;font-size:8.5px;color:#2c2c2c;transform:scaleX(0.8668);">0,00</div>
<div class="t" style="left:555.73px;top:468.83px;font-size:8.5px;color:#2c2c2c;transform:scaleX(0.8668);">0,00</div>
<div class="t" style="left:628.43px;top:468.83px;font-size:8.5px;color:#2c2c2c;transform:scaleX(0.8668);">0,00</div>
<div class="t" style="left:647.31px;top:468.83px;font-size:8.5px;color:#2c2c2c;transform:scaleX(0.8668);">Разглыба С.</div>
<div class="a" style="left:732.2px;top:467.19px;width:50.3px;height:12.7px;background:#0c98dd;border-radius:1.5px"></div>
<div class="t" style="left:738.45px;top:469.25px;font-size:8.6px;color:#fff;transform:scaleX(0.9017);-webkit-text-stroke:0.15px #fff;">Отгружен</div>
<div class="a" style="left:20px;top:503.83px;width:884px;height:1px;background:#e9e9eb"></div>
<div class="a" style="left:27px;top:489.63px;width:9.5px;height:9.5px;border:1px solid #7a7a7a;border-radius:1px;background:#fff"></div>
<div class="t" style="left:42.01px;top:489.77px;font-size:8.5px;color:#3e6c9c;text-decoration:underline;text-decoration-thickness:0.8px;text-underline-offset:0.2px;text-decoration-color:rgba(62,108,156,0.75);transform:scaleX(0.8668);">00004</div>
<div class="t" style="left:86.91px;top:489.77px;font-size:8.5px;color:#3e6c9c;text-decoration:underline;text-decoration-thickness:0.8px;text-underline-offset:0.2px;text-decoration-color:rgba(62,108,156,0.75);transform:scaleX(0.8668);">Иванов И.И.</div>
<div class="t" style="left:172.87px;top:489.77px;font-size:8.5px;color:#2c2c2c;transform:scaleX(0.8668);">ООО &quot;С. Морозова сын и Ко&quot;</div>
<div class="t" style="left:281.41px;top:489.77px;font-size:8.5px;color:#2c2c2c;transform:scaleX(0.8668);">30301810500001000001</div>
<div class="t" style="left:390.20px;top:489.77px;font-size:8.5px;color:#2c2c2c;transform:scaleX(0.8668);">5 681,00</div>
<div class="t" style="left:422.52px;top:489.77px;font-size:8.5px;color:#2c2c2c;transform:scaleX(0.8668);">руб</div>
<div class="t" style="left:477.00px;top:489.77px;font-size:8.5px;color:#2c2c2c;transform:scaleX(0.8668);">5 500,00</div>
<div class="t" style="left:547.51px;top:489.77px;font-size:8.5px;color:#2c2c2c;transform:scaleX(0.8668);">181,00</div>
<div class="t" style="left:628.43px;top:489.77px;font-size:8.5px;color:#2c2c2c;transform:scaleX(0.8668);">0,00</div>
<div class="t" style="left:647.31px;top:489.77px;font-size:8.5px;color:#2c2c2c;transform:scaleX(0.8668);">Разглыба С.</div>
<div class="a" style="left:732.2px;top:488.13px;width:50.3px;height:12.7px;background:#0c98dd;border-radius:1.5px"></div>
<div class="t" style="left:738.45px;top:490.18px;font-size:8.6px;color:#fff;transform:scaleX(0.9017);-webkit-text-stroke:0.15px #fff;">Отгружен</div>
<div class="a" style="left:800px;top:488.13px;width:54px;height:12.7px;background:#05b5e3;border-radius:1.5px"></div>
<div class="t" style="left:806.08px;top:490.18px;font-size:8.6px;color:#fff;transform:scaleX(0.9075);-webkit-text-stroke:0.15px #fff;">Напечатан</div>
<div class="a" style="left:482.3px;top:501.53px;width:24.8px;height:2.6px;background:#e97412"></div>
<div class="a" style="left:20px;top:524.76px;width:884px;height:1px;background:#e9e9eb"></div>
<div class="a" style="left:27px;top:510.56px;width:9.5px;height:9.5px;border:1px solid #7a7a7a;border-radius:1px;background:#fff"></div>
<div class="t" style="left:42.01px;top:510.70px;font-size:8.5px;color:#3e6c9c;text-decoration:underline;text-decoration-thickness:0.8px;text-underline-offset:0.2px;text-decoration-color:rgba(62,108,156,0.75);transform:scaleX(0.8668);">00031</div>
<div class="t" style="left:86.91px;top:510.70px;font-size:8.5px;color:#3e6c9c;text-decoration:underline;text-decoration-thickness:0.8px;text-underline-offset:0.2px;text-decoration-color:rgba(62,108,156,0.75);transform:scaleX(0.8668);">Иванов И.И.</div>
<div class="t" style="left:172.87px;top:510.70px;font-size:8.5px;color:#2c2c2c;transform:scaleX(0.8668);">ООО &quot;С. Морозова сын и Ко&quot;</div>
<div class="t" style="left:281.41px;top:510.70px;font-size:8.5px;color:#2c2c2c;transform:scaleX(0.8668);">30301810500001000001</div>
<div class="t" style="left:390.20px;top:510.70px;font-size:8.5px;color:#2c2c2c;transform:scaleX(0.8668);">7 990,00</div>
<div class="t" style="left:422.52px;top:510.70px;font-size:8.5px;color:#2c2c2c;transform:scaleX(0.8668);">руб</div>
<div class="t" style="left:491.33px;top:510.70px;font-size:8.5px;color:#2c2c2c;transform:scaleX(0.8668);">0,00</div>
<div class="t" style="left:541.40px;top:510.70px;font-size:8.5px;color:#2c2c2c;transform:scaleX(0.8668);">7 990,00</div>
<div class="t" style="left:628.43px;top:510.70px;font-size:8.5px;color:#2c2c2c;transform:scaleX(0.8668);">0,00</div>
<div class="t" style="left:647.31px;top:510.70px;font-size:8.5px;color:#2c2c2c;transform:scaleX(0.8668);">Разглыба С.</div>
<div class="a" style="left:732.2px;top:509.06px;width:50.3px;height:12.7px;background:#0c98dd;border-radius:1.5px"></div>
<div class="t" style="left:738.45px;top:511.12px;font-size:8.6px;color:#fff;transform:scaleX(0.9017);-webkit-text-stroke:0.15px #fff;">Отгружен</div>
<div class="a" style="left:20px;top:545.70px;width:884px;height:1px;background:#e9e9eb"></div>
<div class="a" style="left:27px;top:531.50px;width:9.5px;height:9.5px;border:1px solid #7a7a7a;border-radius:1px;background:#fff"></div>
<div class="t" style="left:42.01px;top:531.64px;font-size:8.5px;color:#3e6c9c;text-decoration:underline;text-decoration-thickness:0.8px;text-underline-offset:0.2px;text-decoration-color:rgba(62,108,156,0.75);transform:scaleX(0.8668);">00005</div>
<div class="t" style="left:86.91px;top:531.64px;font-size:8.5px;color:#3e6c9c;text-decoration:underline;text-decoration-thickness:0.8px;text-underline-offset:0.2px;text-decoration-color:rgba(62,108,156,0.75);transform:scaleX(0.8668);">Иванов И.И.</div>
<div class="t" style="left:172.87px;top:531.64px;font-size:8.5px;color:#2c2c2c;transform:scaleX(0.8668);">ООО &quot;С. Морозова сын и Ко&quot;</div>
<div class="t" style="left:281.41px;top:531.64px;font-size:8.5px;color:#2c2c2c;transform:scaleX(0.8668);">30301810500001000001</div>
<div class="t" style="left:396.35px;top:531.64px;font-size:8.5px;color:#2c2c2c;transform:scaleX(0.8668);">228,63</div>
<div class="t" style="left:422.93px;top:531.64px;font-size:8.5px;color:#2c2c2c;transform:scaleX(0.8668);">доллар</div>
<div class="t" style="left:491.33px;top:531.64px;font-size:8.5px;color:#2c2c2c;transform:scaleX(0.8668);">0,00</div>
<div class="t" style="left:547.55px;top:531.64px;font-size:8.5px;color:#2c2c2c;transform:scaleX(0.8668);">228,63</div>
<div class="t" style="left:628.43px;top:531.64px;font-size:8.5px;color:#2c2c2c;transform:scaleX(0.8668);">0,00</div>
<div class="a" style="left:732.2px;top:530.00px;width:50.3px;height:12.7px;background:#0c98dd;border-radius:1.5px"></div>
<div class="t" style="left:738.45px;top:532.06px;font-size:8.6px;color:#fff;transform:scaleX(0.9017);-webkit-text-stroke:0.15px #fff;">Отгружен</div>
<div class="a" style="left:800px;top:530.00px;width:54px;height:12.7px;background:#05b5e3;border-radius:1.5px"></div>
<div class="t" style="left:806.08px;top:532.06px;font-size:8.6px;color:#fff;transform:scaleX(0.9075);-webkit-text-stroke:0.15px #fff;">Напечатан</div>
<div class="a" style="left:20px;top:566.63px;width:884px;height:1px;background:#e9e9eb"></div>
<div class="a" style="left:27px;top:552.43px;width:9.5px;height:9.5px;border:1px solid #7a7a7a;border-radius:1px;background:#fff"></div>
<div class="t" style="left:41.97px;top:552.57px;font-size:8.5px;color:#a9a9a9;font-style:italic;text-decoration:underline;text-decoration-thickness:0.8px;text-underline-offset:0.2px;text-decoration-color:rgba(62,108,156,0.75);transform:scaleX(0.8668);">00007</div>
<div class="t" style="left:87.28px;top:552.57px;font-size:8.5px;color:#a9a9a9;font-style:italic;text-decoration:underline;text-decoration-thickness:0.8px;text-underline-offset:0.2px;text-decoration-color:rgba(62,108,156,0.75);transform:scaleX(0.8668);">Иванов И.И.</div>
<div class="t" style="left:172.79px;top:552.57px;font-size:8.5px;color:#a9a9a9;font-style:italic;transform:scaleX(0.8668);">ООО &quot;С. Морозова сын и Ко&quot;</div>
<div class="t" style="left:281.52px;top:552.57px;font-size:8.5px;color:#a9a9a9;font-style:italic;transform:scaleX(0.8668);">30301810500001000001</div>
<div class="t" style="left:389.98px;top:552.57px;font-size:8.5px;color:#a9a9a9;font-style:italic;transform:scaleX(0.8668);">5 681,00</div>
<div class="t" style="left:423.18px;top:552.57px;font-size:8.5px;color:#a9a9a9;font-style:italic;transform:scaleX(0.8668);">руб</div>
<div class="t" style="left:491.11px;top:552.57px;font-size:8.5px;color:#a9a9a9;font-style:italic;transform:scaleX(0.8668);">0,00</div>
<div class="t" style="left:541.18px;top:552.57px;font-size:8.5px;color:#a9a9a9;font-style:italic;transform:scaleX(0.8668);">5 681,00</div>
<div class="t" style="left:628.21px;top:552.57px;font-size:8.5px;color:#a9a9a9;font-style:italic;transform:scaleX(0.8668);">0,00</div>
<div class="t" style="left:647.68px;top:552.57px;font-size:8.5px;color:#a9a9a9;font-style:italic;transform:scaleX(0.8668);">Разглыба С.</div>
<div class="a" style="left:20px;top:587.57px;width:884px;height:1px;background:#e9e9eb"></div>
<div class="a" style="left:27px;top:573.37px;width:9.5px;height:9.5px;border:1px solid #7a7a7a;border-radius:1px;background:#fff"></div>
<div class="t" style="left:42.01px;top:573.51px;font-size:8.5px;color:#3e6c9c;text-decoration:underline;text-decoration-thickness:0.8px;text-underline-offset:0.2px;text-decoration-color:rgba(62,108,156,0.75);transform:scaleX(0.8668);">00008</div>
<div class="t" style="left:86.91px;top:573.51px;font-size:8.5px;color:#3e6c9c;text-decoration:underline;text-decoration-thickness:0.8px;text-underline-offset:0.2px;text-decoration-color:rgba(62,108,156,0.75);transform:scaleX(0.8668);">Иванов И.И.</div>
<div class="t" style="left:172.87px;top:573.51px;font-size:8.5px;color:#2c2c2c;transform:scaleX(0.8668);">ООО &quot;С. Морозова сын и Ко&quot;</div>
<div class="t" style="left:281.41px;top:573.51px;font-size:8.5px;color:#2c2c2c;transform:scaleX(0.8668);">30301810500001000001</div>
<div class="t" style="left:396.35px;top:573.51px;font-size:8.5px;color:#2c2c2c;transform:scaleX(0.8668);">228,63</div>
<div class="t" style="left:422.93px;top:573.51px;font-size:8.5px;color:#2c2c2c;transform:scaleX(0.8668);">доллар</div>
<div class="t" style="left:483.15px;top:573.51px;font-size:8.5px;color:#2c2c2c;transform:scaleX(0.8668);">228,63</div>
<div class="t" style="left:555.73px;top:573.51px;font-size:8.5px;color:#2c2c2c;transform:scaleX(0.8668);">0,00</div>
<div class="t" style="left:628.43px;top:573.51px;font-size:8.5px;color:#2c2c2c;transform:scaleX(0.8668);">0,00</div>
<div class="t" style="left:647.31px;top:573.51px;font-size:8.5px;color:#2c2c2c;transform:scaleX(0.8668);">Разглыба С.</div>
<div class="a" style="left:732.2px;top:571.87px;width:50.3px;height:12.7px;background:#0c98dd;border-radius:1.5px"></div>
<div class="t" style="left:738.45px;top:573.93px;font-size:8.6px;color:#fff;transform:scaleX(0.9017);-webkit-text-stroke:0.15px #fff;">Отгружен</div>
<div class="a" style="left:460.2px;top:585.27px;width:46.8px;height:2.7px;background:#78a04e"></div>
<div class="a" style="left:372.3px;top:152.4px;width:31.2px;height:13.6px;background:rgba(255,255,255,0.55);border:1px solid #cfcfcf;box-shadow:1px 1px 1px rgba(0,0,0,0.08)"></div>
<div class="t" style="left:374.63px;top:155.04px;font-size:8.5px;color:rgba(150,150,150,0.6);transform:scaleX(0.8668);">Сумма</div>
<svg class="a" style="left:365px;top:135px" width="13" height="17" viewBox="0 0 13 17">
<path d="M3.5 1.5 C4.5 1 5.5 1.5 5.5 2.5 V7 C6 6.3 7.3 6.5 7.5 7.3 C8 6.6 9.3 6.9 9.5 7.7 C10 7.1 11.5 7.4 11.5 8.5 V12 C11.5 14.5 10 16 7.5 16 C5 16 4 15 3 13 L1.2 9.8 C0.8 9 1.6 8.2 2.4 8.8 L3.5 10 V2.5 Z" fill="#fff" stroke="#333" stroke-width="0.9" stroke-linejoin="round"/>
</svg>
<div class="a" style="left:0;top:587px;width:1014px;height:5px;background:linear-gradient(rgba(0,0,0,0.02),rgba(0,0,0,0.12) 60%,rgba(60,60,60,0.55))"></div>
<div class="a" style="left:0;top:592px;width:1014px;height:14px;background:#fdfcfe"></div>
<div class="a" style="left:27.25px;top:595.75px;width:8.55px;height:8.2px;border:1px solid #e2e2e2;border-radius:1.5px;background:#fff"></div>
<div class="a" style="left:39px;top:595.75px;width:9.00px;height:8.2px;border:1px solid #e2e2e2;border-radius:1.5px;background:#fff"></div>
<div class="a" style="left:126.6px;top:595.75px;width:8.90px;height:8.2px;border:1px solid #e2e2e2;border-radius:1.5px;background:#fff"></div>
<div class="a" style="left:138.3px;top:595.75px;width:9.20px;height:8.2px;border:1px solid #e2e2e2;border-radius:1.5px;background:#fff"></div>
<div class="t" style="left:28px;top:595.6px;width:7.6px;text-align:center;font-size:8px;color:#cfcfcf">«</div>
<div class="t" style="left:39.8px;top:595.6px;width:7.4px;text-align:center;font-size:8px;color:#cfcfcf">‹</div>
<div class="t" style="left:127.3px;top:595.6px;width:7.4px;text-align:center;font-size:8px;color:#cfcfcf">›</div>
<div class="t" style="left:139px;top:595.6px;width:7.6px;text-align:center;font-size:8px;color:#cfcfcf">»</div>
<div class="t" style="left:70.04px;top:596.72px;font-size:8.4px;color:#333;transform:scaleX(0.8909);">1-43 из 43</div>
<div class="t" style="left:376.14px;top:596.76px;font-size:8.0px;color:#222;font-weight:700;transform:scaleX(1.0790);">522 769,00</div>
<div class="t" style="left:464.10px;top:596.76px;font-size:8.0px;color:#222;font-weight:700;transform:scaleX(1.0776);">212 158,10</div>
<div class="t" style="left:528.38px;top:596.76px;font-size:8.0px;color:#222;font-weight:700;transform:scaleX(1.0792);">310 610,90</div>
<div class="t" style="left:617.84px;top:596.76px;font-size:8.0px;color:#222;font-weight:700;transform:scaleX(1.0911);">500,00</div>
</body></html>
